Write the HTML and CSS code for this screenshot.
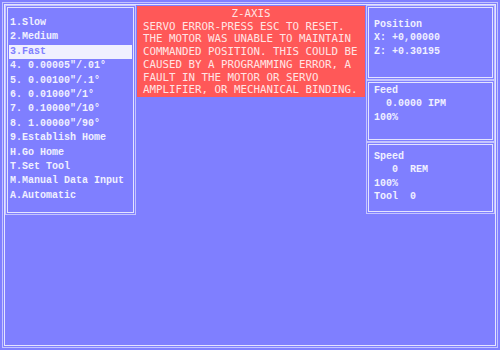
FILE: index.html
```html
<!DOCTYPE html>
<html>
<head>
<meta charset="utf-8">
<link rel="stylesheet" href="styles.css">
</head>
<body>
<div class="screen">
  <div class="frame">
    <div class="panel menu">
      <div class="row">1.Slow</div>
      <div class="row">2.Medium</div>
      <div class="row sel">3.Fast</div>
      <div class="row">4. 0.00005″/.01°</div>
      <div class="row">5. 0.00100″/.1°</div>
      <div class="row">6. 0.01000″/1°</div>
      <div class="row">7. 0.10000″/10°</div>
      <div class="row">8. 1.00000″/90°</div>
      <div class="row">9.Establish Home</div>
      <div class="row">H.Go Home</div>
      <div class="row">T.Set Tool</div>
      <div class="row">M.Manual Data Input</div>
      <div class="row">A.Automatic</div>
    </div>
    <div class="alert">
      <div class="line title">Z-AXIS</div>
      <div class="line">SERVO ERROR-PRESS ESC TO RESET.</div>
      <div class="line">THE MOTOR WAS UNABLE TO MAINTAIN</div>
      <div class="line">COMMANDED POSITION. THIS COULD BE</div>
      <div class="line">CAUSED BY A PROGRAMMING ERROR, A</div>
      <div class="line">FAULT IN THE MOTOR OR SERVO</div>
      <div class="line">AMPLIFIER, OR MECHANICAL BINDING.</div>
    </div>
    <div class="side">
      <div class="panel info pos">
        <div class="line">Position</div>
        <div class="line">X: +0,00000</div>
        <div class="line">Z: +0.30195</div>
      </div>
      <div class="panel info feed">
        <div class="line">Feed</div>
        <div class="line">  0.0000 IPM</div>
        <div class="line">100%</div>
      </div>
      <div class="panel info speed">
        <div class="line">Speed</div>
        <div class="line">   0  REM</div>
        <div class="line">100%</div>
        <div class="line">Tool  0</div>
      </div>
    </div>
  </div>
</div>
</body>
</html>
```
FILE: styles.css
```css
html, body {
  margin: 0;
  padding: 0;
  background: #7f7fff;
}
.screen {
  width: 500px;
  height: 350px;
  box-sizing: border-box;
  padding: 2px;
  font-family: "Liberation Mono", "DejaVu Sans Mono", monospace;
  font-size: 10px;
  color: #f0f0ff;
}
.frame {
  height: 100%;
  box-sizing: border-box;
  border: 1px solid #c4c4ff;
  box-shadow: inset 0 0 0 1px #7f7fff, inset 0 0 0 2px #e4e4ff;
  padding: 2px;
  display: flex;
  align-items: flex-start;
}
.panel {
  box-sizing: border-box;
  border: 1px solid #c4c4ff;
  box-shadow: inset 0 0 0 1px #7f7fff, inset 0 0 0 2px #e4e4ff;
}
.line {
  white-space: pre;
}
.menu {
  width: 131px;
  height: 210px;
  padding: 10px 3px 0 3px;
  font-weight: bold;
}
.row {
  height: 14.4px;
  line-height: 14.4px;
  padding-left: 1px;
  white-space: pre;
}
.row.sel {
  background: #f0f0ff;
  color: #8080ff;
}
.alert {
  flex: 1;
  margin: 1px 1px 0 1px;
  height: 91px;
  background: #ff5858;
  color: #ffe4e4;
  font-family: "DejaVu Sans Mono", monospace;
  font-size: 10.8px;
  line-height: 12.7px;
  padding: 2px 0 0 6px;
  box-sizing: border-box;
}
.alert .title {
  text-align: center;
  padding-right: 6px;
}
.side {
  width: 129px;
  display: flex;
  flex-direction: column;
}
.info {
  padding-left: 7px;
  line-height: 13.3px;
  font-weight: bold;
}
.pos {
  height: 75px;
  padding-top: 12px;
}
.feed {
  height: 62px;
  padding-top: 3px;
}
.speed {
  height: 72px;
  padding-top: 7px;
}
```
